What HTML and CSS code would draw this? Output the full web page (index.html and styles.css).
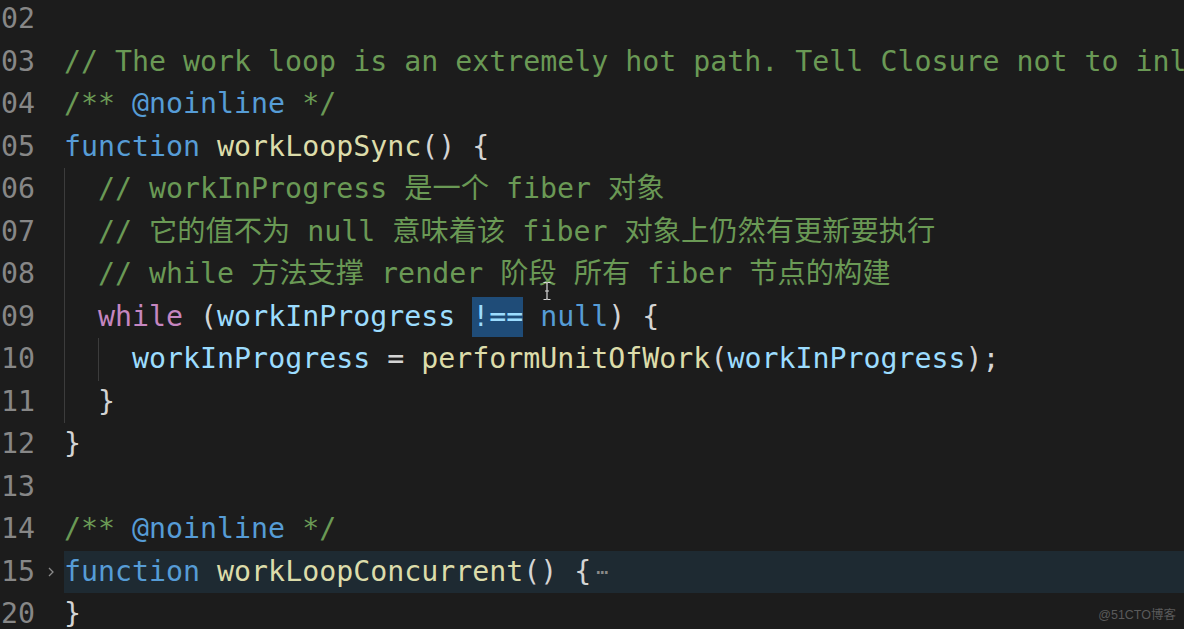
FILE: index.html
```html
<!DOCTYPE html>
<html lang="zh-CN">
<head>
<meta charset="utf-8">
<title>workLoopSync</title>
<link rel="stylesheet" href="styles.css">
</head>
<body>
<div class="editor">
  <div class="line"><span class="ln">102</span><span class="fold"></span><span class="code"></span></div>
  <div class="line"><span class="ln">103</span><span class="fold"></span><span class="code"><span class="c">// The work loop is an extremely hot path. Tell Closure not to inline it.</span></span></div>
  <div class="line"><span class="ln">104</span><span class="fold"></span><span class="code"><span class="c">/** </span><span class="k">@noinline</span><span class="c"> */</span></span></div>
  <div class="line"><span class="ln">105</span><span class="fold"></span><span class="code"><span class="k">function</span> <span class="f">workLoopSync</span><span class="p">() {</span></span></div>
  <div class="line"><span class="ln">106</span><span class="fold"></span><span class="code"><span class="ind">  </span><span class="c">// workInProgress 是一个 fiber 对象</span></span></div>
  <div class="line"><span class="ln">107</span><span class="fold"></span><span class="code"><span class="ind">  </span><span class="c">// 它的值不为 null 意味着该 fiber 对象上仍然有更新要执行</span></span></div>
  <div class="line"><span class="ln">108</span><span class="fold"></span><span class="code"><span class="ind">  </span><span class="c">// while 方法支撑 render 阶段 所有 fiber 节点的构建</span></span></div>
  <div class="line"><span class="ln">109</span><span class="fold"></span><span class="code"><span class="ind">  </span><span class="w">while</span> <span class="p">(</span><span class="v">workInProgress</span> <span class="sel">!==</span> <span class="k">null</span><span class="p">) {</span></span></div>
  <div class="line"><span class="ln">110</span><span class="fold"></span><span class="code"><span class="ind">  </span><span class="ind">  </span><span class="v">workInProgress</span> <span class="p">=</span> <span class="f">performUnitOfWork</span><span class="p">(</span><span class="v">workInProgress</span><span class="p">);</span></span></div>
  <div class="line"><span class="ln">111</span><span class="fold"></span><span class="code"><span class="ind">  </span><span class="p">}</span></span></div>
  <div class="line"><span class="ln">112</span><span class="fold"></span><span class="code"><span class="p">}</span></span></div>
  <div class="line"><span class="ln">113</span><span class="fold"></span><span class="code"></span></div>
  <div class="line"><span class="ln">114</span><span class="fold"></span><span class="code"><span class="c">/** </span><span class="k">@noinline</span><span class="c"> */</span></span></div>
  <div class="line current"><span class="ln">115</span><span class="fold"><svg class="chev" width="8" height="12" viewBox="0 0 8 12"><path d="M2 2 L6 6 L2 10" fill="none" stroke="#8a8a8a" stroke-width="1.3"/></svg></span><span class="code"><span class="k">function</span> <span class="f">workLoopConcurrent</span><span class="p">() {</span><span class="more">⋯</span></span></div>
  <div class="line"><span class="ln">120</span><span class="fold"></span><span class="code"><span class="p">}</span></span></div>
</div>
<svg class="ibeam" width="10" height="20" viewBox="0 0 10 20"><path d="M1.5 1.5 H4 Q5 1.5 5 3 V17 Q5 18.5 4 18.5 H1.5 M8.5 1.5 H6 Q5 1.5 5 3 M5 17 Q5 18.5 6 18.5 H8.5 M3 10 H7" fill="none" stroke="#d8d8d8" stroke-width="1.2"/></svg>
<div class="watermark">@51CTO博客</div>
</body>
</html>
```
FILE: styles.css
```css
html, body {
  margin: 0;
  padding: 0;
  background: #1c1c1c;
  overflow: hidden;
  width: 1184px;
  height: 629px;
}

body {
  position: relative;
}

.editor {
  margin-top: -2px;
  margin-left: -17px;
  font-family: "DejaVu Sans Mono", "Noto Sans CJK SC", monospace;
  font-size: 28.25px;
  color: #d4d4d4;
}

.line {
  display: flex;
  height: 42.5px;
  line-height: 42.5px;
  white-space: pre;
}

.ln {
  flex: 0 0 52px;
  text-align: right;
  color: #878787;
}

.fold {
  flex: 0 0 29px;
  display: flex;
  align-items: center;
  justify-content: center;
  padding-left: 2px;
  box-sizing: border-box;
}

.chev {
  display: block;
}

.code {
  flex: 1;
  white-space: pre;
  overflow: hidden;
}

.current .code {
  background: #1e2a32;
}

.ind {
  display: inline-block;
  height: 42.5px;
  vertical-align: top;
  box-shadow: inset 1px 0 0 #3c3c3c;
}

.c { color: #6a9955; }
.k { color: #569cd6; }
.f { color: #dcdcaa; }
.v { color: #9cdcfe; }
.w { color: #c586c0; }
.p { color: #d4d4d4; }

.sel {
  display: inline-block;
  line-height: 40px;
  height: 40px;
  margin-top: 1px;
  vertical-align: top;
  background: #1f4c78;
  color: #9cdcfe;
}

.more {
  color: #8a8a8a;
  font-size: 20px;
  margin-left: 5px;
  vertical-align: 2px;
}

.ibeam {
  position: absolute;
  left: 542px;
  top: 281px;
}

.watermark {
  position: absolute;
  right: 8px;
  bottom: 6px;
  font-family: "Liberation Sans", "Noto Sans CJK SC", sans-serif;
  font-size: 12.5px;
  color: #5a5a5a;
}
```
